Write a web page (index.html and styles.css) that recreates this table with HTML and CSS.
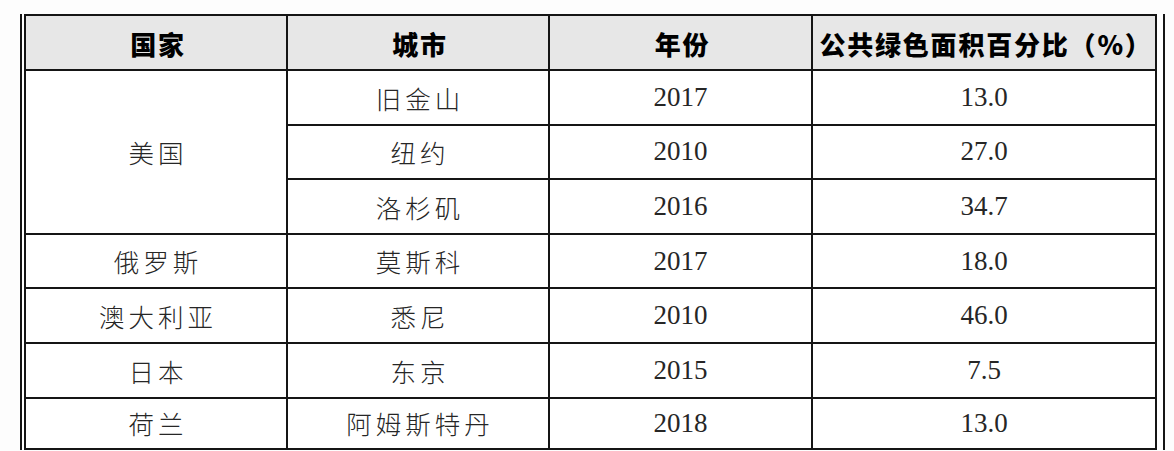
FILE: index.html
```html
<!DOCTYPE html>
<html lang="zh-CN">
<head>
<meta charset="utf-8">
<title>公共绿色面积百分比</title>
<link rel="stylesheet" href="styles.css">
</head>
<body>
<div class="frame">
  <table class="data">
    <colgroup>
      <col class="c1"><col class="c2"><col class="c3"><col class="c4">
    </colgroup>
    <thead>
      <tr class="head">
        <th>国家</th><th>城市</th><th>年份</th><th>公共绿色面积百分比（%）</th>
      </tr>
    </thead>
    <tbody>
      <tr><td rowspan="3" class="cjk">美国</td><td class="cjk">旧金山</td><td class="num">2017</td><td class="num">13.0</td></tr>
      <tr><td class="cjk">纽约</td><td class="num">2010</td><td class="num">27.0</td></tr>
      <tr><td class="cjk">洛杉矶</td><td class="num">2016</td><td class="num">34.7</td></tr>
      <tr><td class="cjk">俄罗斯</td><td class="cjk">莫斯科</td><td class="num">2017</td><td class="num">18.0</td></tr>
      <tr><td class="cjk">澳大利亚</td><td class="cjk">悉尼</td><td class="num">2010</td><td class="num">46.0</td></tr>
      <tr><td class="cjk">日本</td><td class="cjk">东京</td><td class="num">2015</td><td class="num">7.5</td></tr>
      <tr class="last"><td class="cjk">荷兰</td><td class="cjk">阿姆斯特丹</td><td class="num">2018</td><td class="num">13.0</td></tr>
    </tbody>
  </table>
</div>
</body>
</html>
```

FILE: styles.css
```css
html, body {
  margin: 0;
  padding: 0;
  background: #fdfdfd;
}

body {
  padding-top: 14px;
  padding-left: 20px;
  height: 451px;
  box-sizing: border-box;
  overflow: hidden;
}

.frame {
  width: 1137px;
  border-left: 2px solid #151515;
  border-right: 2px solid #151515;
  padding: 0 2px;
  box-sizing: content-box;
  background: #ffffff;
}

.data {
  width: 1133px;
  table-layout: fixed;
  border-collapse: collapse;
  background: #ffffff;
}

.c1 { width: 262px; }
.c2 { width: 262px; }
.c3 { width: 263px; }
.c4 { width: 344px; }

.data th,
.data td {
  border: 2px solid #151515;
  padding: 0;
  text-align: center;
  vertical-align: middle;
}

.head th {
  height: 50px;
  background: #e7e7e7;
  color: #000000;
  font-family: "Noto Sans CJK SC", sans-serif;
  font-weight: 900;
  font-size: 26px;
  letter-spacing: 1.8px;
  text-indent: 4px;
  padding-top: 3px;
  line-height: 1;
}

.data tbody td {
  height: 52.6px;
  color: #262626;
}

.data tbody tr.last td {
  height: 49px;
}

.cjk {
  font-family: "Noto Sans CJK SC", sans-serif;
  font-weight: 300;
  font-size: 25.5px;
  letter-spacing: 4px;
  text-indent: 4px;
  line-height: 1;
}

.num {
  font-family: "Liberation Serif", "Times New Roman", serif;
  font-size: 27px;
  line-height: 1;
}
```
